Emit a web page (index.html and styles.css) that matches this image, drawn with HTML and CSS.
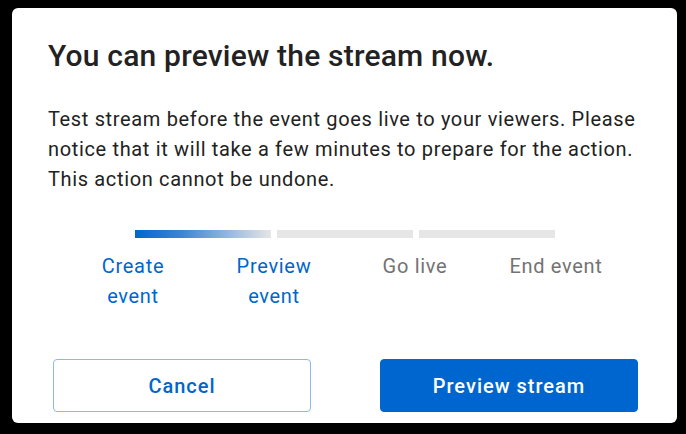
FILE: index.html
```html
<!DOCTYPE html>
<html lang="en">
<head>
<meta charset="utf-8">
<title>Preview stream</title>
<link rel="stylesheet" href="styles.css">
</head>
<body>
<div class="dialog">
  <h1 class="title">You can preview the stream now.</h1>
  <p class="desc">Test stream before the event goes live to your viewers. Please notice that it will take a few minutes to prepare for the action. This action cannot be undone.</p>
  <div class="steps">
    <div class="bars">
      <span class="bar bar-active"></span>
      <span class="bar"></span>
      <span class="bar"></span>
    </div>
    <div class="labels">
      <span class="label done">Create<br>event</span>
      <span class="label done">Preview<br>event</span>
      <span class="label">Go live</span>
      <span class="label">End event</span>
    </div>
  </div>
  <div class="actions">
    <button class="btn btn-secondary">Cancel</button>
    <button class="btn btn-primary">Preview stream</button>
  </div>
</div>
</body>
</html>
```
FILE: styles.css
```css
html, body {
  margin: 0;
  padding: 0;
  background: #000;
  height: 100%;
}
body {
  font-family: Roboto, "Liberation Sans", sans-serif;
  color: #222;
  overflow: hidden;
}
.dialog {
  box-sizing: border-box;
  margin: 8px 0 0 12px;
  width: 665px;
  height: 415px;
  background: #fff;
  border-radius: 6px;
  padding: 0 36px;
  display: flex;
  flex-direction: column;
}
.title {
  margin: 30px 0 0;
  font-size: 30px;
  line-height: 36px;
  font-weight: 500;
  letter-spacing: 0.2px;
  color: #222;
}
.desc {
  margin: 30px 0 0;
  font-size: 20px;
  line-height: 30px;
  letter-spacing: 0.65px;
  color: #222;
}
.steps {
  margin-top: 36px;
  display: flex;
  flex-direction: column;
  align-items: center;
}
.bars {
  display: flex;
  gap: 6px;
}
.bar {
  width: 136px;
  height: 8px;
  background: #e6e6e6;
}
.bar-active {
  background: linear-gradient(to right, #0066cf 0%, #3d86d6 35%, #e6e6e6 100%);
}
.labels {
  display: flex;
  margin-top: 13px;
}
.label {
  width: 141px;
  text-align: center;
  font-size: 20px;
  line-height: 30px;
  letter-spacing: 0.7px;
  color: #737373;
}
.label.done {
  color: #0066cc;
}
.actions {
  margin-top: auto;
  margin-bottom: 11px;
  padding: 0 3px 0 5px;
  display: flex;
  justify-content: space-between;
}
.btn {
  width: 258px;
  height: 53px;
  border-radius: 4px;
  font-family: Roboto, "Liberation Sans", sans-serif;
  font-size: 20px;
  font-weight: 500;
  letter-spacing: 1px;
  cursor: pointer;
}
.btn-secondary {
  background: #fff;
  border: 1px solid #8db8ea;
  color: #0066cc;
}
.btn-primary {
  background: #0066cf;
  border: 1px solid #0066cf;
  color: #fff;
}
```
